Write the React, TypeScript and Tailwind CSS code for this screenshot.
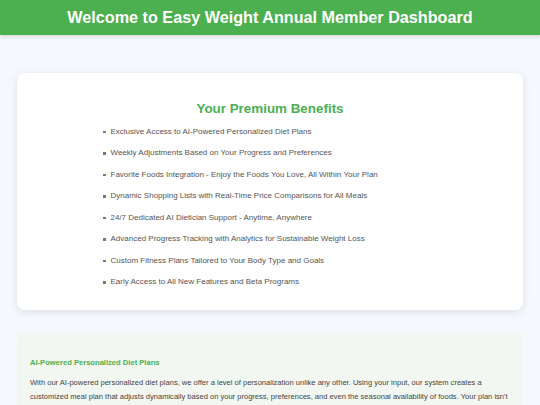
const benefits = [
  "Exclusive Access to AI-Powered Personalized Diet Plans",
  "Weekly Adjustments Based on Your Progress and Preferences",
  "Favorite Foods Integration - Enjoy the Foods You Love, All Within Your Plan",
  "Dynamic Shopping Lists with Real-Time Price Comparisons for All Meals",
  "24/7 Dedicated AI Dietician Support - Anytime, Anywhere",
  "Advanced Progress Tracking with Analytics for Sustainable Weight Loss",
  "Custom Fitness Plans Tailored to Your Body Type and Goals",
  "Early Access to All New Features and Beta Programs",
];

export default function App() {
  return (
    <div className="min-h-[405px] bg-[#f5f8fc] font-['Liberation_Sans',Arial,sans-serif]">
      {/* Header */}
      <header className="flex h-[35px] items-center justify-center bg-[#4caf50] shadow-[0_2px_4px_rgba(0,0,0,0.12)]">
        <h1 className="text-[16.2px] font-bold leading-none text-white">
          Welcome to Easy Weight Annual Member Dashboard
        </h1>
      </header>

      <main className="px-[17px] pt-[38px]">
        {/* Benefits card */}
        <section className="rounded-[8px] bg-white pt-[28px] pb-[17px] shadow-[0_2px_8px_rgba(0,0,0,0.1)]">
          <h2 className="text-center text-[13.4px] font-bold leading-[16px] text-[#4caf50]">
            Your Premium Benefits
          </h2>
          <ul className="mt-[4px] pl-[86px]">
            {benefits.map((b) => (
              <li key={b} className="flex h-[21.5px] items-center gap-[5px] text-[8px] text-[#555]">
                <span className="h-[2.5px] w-[2.5px] shrink-0 bg-[#777]" />
                {b}
              </li>
            ))}
          </ul>
        </section>

        {/* Feature detail */}
        <section className="mt-[23px] rounded-[6px] bg-[#f3f7f1] px-[13px] pt-[24px] pb-[20px]">
          <h3 className="text-[7.6px] font-bold leading-[12px] text-[#4caf50]">
            AI-Powered Personalized Diet Plans
          </h3>
          <p className="mt-[7px] text-[7.55px] leading-[14px] text-[#444]">
            With our AI-powered personalized diet plans, we offer a level of personalization unlike any other. Using your input, our system creates a customized meal plan that adjusts dynamically based on your progress, preferences, and even the seasonal availability of foods. Your plan isn't static; it evolves alongside you, with recommendations updated every week to keep you motivated and on track.
          </p>
        </section>
      </main>
    </div>
  );
}
